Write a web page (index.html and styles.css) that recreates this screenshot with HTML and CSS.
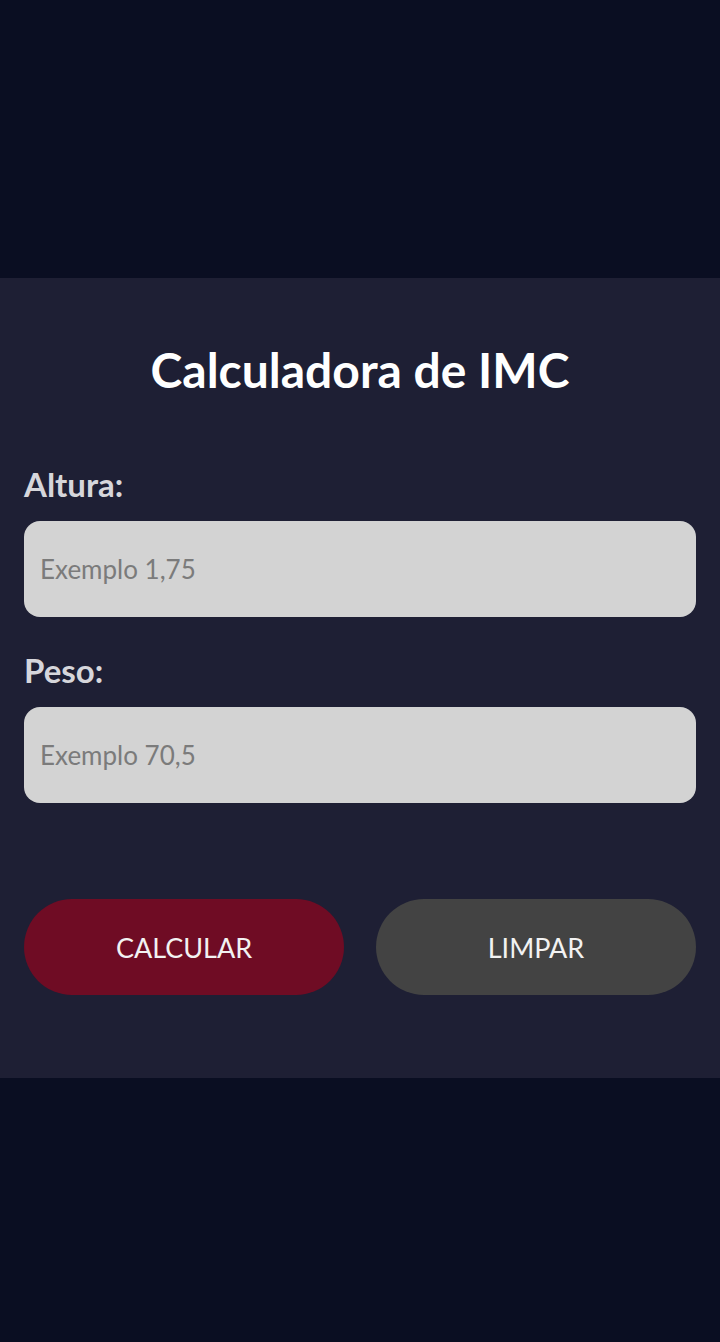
FILE: index.html
```html
<!DOCTYPE html>
<html lang="pt-BR">
<head>
    <meta charset="UTF-8">
    <meta name="viewport" content="width=device-width, initial-scale=1.0">
    <title>Calculadora de IMC</title>
    <link rel="stylesheet" href="styles.css">
</head>
<body>
    <div class="page">
        <div class="card">
            <h1>Calculadora de IMC</h1>

            <label for="altura" class="label">Altura:</label>
            <input type="text" id="altura" class="field" placeholder="Exemplo 1,75">

            <label for="peso" class="label peso">Peso:</label>
            <input type="text" id="peso" class="field" placeholder="Exemplo 70,5">

            <div class="buttons">
                <button type="button" class="calcular">CALCULAR</button>
                <button type="button" class="limpar">LIMPAR</button>
            </div>
        </div>
    </div>
</body>
</html>
```

FILE: styles.css
```css
html, body {
    margin: 0;
    padding: 0;
    background-color: #0a0e22;
    font-family: Lato, "Open Sans", sans-serif;
}
.page {
    min-height: 1342px;
    box-sizing: border-box;
    padding-top: 14px;
    display: flex;
    flex-direction: column;
    justify-content: center;
}
.card {
    background-color: #1e1f34;
    padding: 0 24px 83px 24px;
    display: flex;
    flex-direction: column;
}
h1 {
    margin: 64px 0 0 0;
    color: #fff;
    font-size: 48px;
    line-height: 56px;
    font-weight: 700;
    text-align: center;
}
.label {
    margin-top: 68px;
    color: #d6d6db;
    font-size: 33px;
    line-height: 36px;
    font-weight: 700;
}
.label.peso {
    margin-top: 35px;
}
.field {
    margin-top: 19px;
    height: 96px;
    box-sizing: border-box;
    border: none;
    border-radius: 16px;
    background-color: #d3d3d3;
    padding: 0 16px;
    font-family: Lato, sans-serif;
    font-size: 26px;
    color: #333;
    outline: none;
}
.field::placeholder {
    color: #7b7b7b;
}
.buttons {
    margin-top: 96px;
    display: flex;
    gap: 32px;
}
.buttons button {
    flex: 1;
    height: 96px;
    border: none;
    border-radius: 48px;
    color: #f2f2f2;
    font-family: Lato, sans-serif;
    font-size: 27px;
    cursor: pointer;
}
.calcular {
    background-color: #6f0c24;
}
.limpar {
    background-color: #434343;
}
```
